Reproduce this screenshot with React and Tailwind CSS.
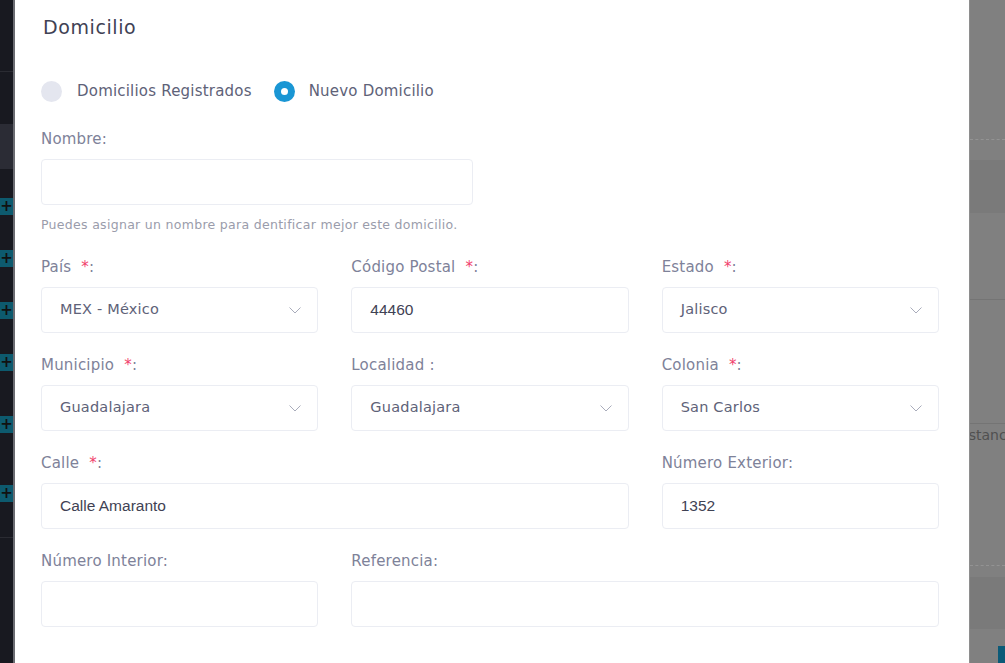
import React from 'react';

const sans = { fontFamily: '"DejaVu Sans", "Open Sans", sans-serif' };

const Chevron = () => (
  <svg width="12" height="7" viewBox="0 0 12 7" fill="none" className="shrink-0">
    <path d="M0.5 0.5 L6 6 L11.5 0.5" stroke="#a9acbb" strokeWidth="1" />
  </svg>
);

const Label = ({ children, required }) => (
  <div className="h-[20px] text-[15px] tracking-[0.2px] leading-[20px] text-[#7e8299] mb-[10px] whitespace-nowrap">
    {children}
    {required && <span className="text-[#f1416c] ml-[5px]">*</span>}
    :
  </div>
);

const SelectBox = ({ value }) => (
  <div className="h-[46px] rounded-[4px] border border-[#ebedf3] flex items-center justify-between pl-[18px] pr-[16px]">
    <span className="text-[14.5px] tracking-[0.2px] text-[#5e6278]">{value}</span>
    <Chevron />
  </div>
);

const InputBox = ({ value }) => (
  <div className="h-[46px] rounded-[4px] border border-[#ebedf3] flex items-center pl-[18px]">
    <span className="text-[15.5px] text-[#3f4254]" style={{ fontFamily: '"Liberation Sans", Arial, sans-serif' }}>
      {value}
    </span>
  </div>
);

const PlusTab = () => (
  <div className="w-[13px] h-[17px] bg-[#0d5a6e] flex items-center justify-center">
    <span className="text-[#111] text-[15px] font-bold leading-none">+</span>
  </div>
);

const LeftStrip = () => (
  <div className="w-[15px] shrink-0 bg-[#181920] border-r-2 border-[#6b6c72] flex flex-col">
    <div className="h-[72px] border-b border-[#2a2b32]" />
    <div className="h-[52px]" />
    <div className="h-[45px] bg-[#2b2c35]" />
    <div className="h-[29px]" />
    <PlusTab />
    <div className="h-[35px]" />
    <PlusTab />
    <div className="h-[35px]" />
    <PlusTab />
    <div className="h-[35px]" />
    <PlusTab />
    <div className="h-[45px]" />
    <PlusTab />
    <div className="h-[52px]" />
    <PlusTab />
    <div className="h-[36px] border-b border-[#2a2b32]" />
  </div>
);

const RightStrip = () => (
  <div className="flex-1 bg-[#808080] border-l border-[#8e8e8e] flex flex-col overflow-hidden">
    <div className="h-[140px] border-b border-dashed border-[#939393]" />
    <div className="h-[20px]" />
    <div className="h-[53px] bg-[#7a7a7a]" />
    <div className="h-[87px] border-b border-[#747474]" />
    <div className="h-[124px] border-b border-[#747474]" />
    <div className="h-[22px] overflow-hidden whitespace-nowrap text-[14px] leading-[22px] text-[#505050] -ml-[16px]">Distancia</div>
    <div className="h-[120px] border-b border-dashed border-[#939393]" />
    <div className="h-[11px]" />
    <div className="h-[52px] bg-[#7a7a7a]" />
    <div className="h-[17px]" />
    <div className="flex-1 ml-[28px] bg-[#0b5a78]" />
  </div>
);

export default function App() {
  return (
    <div className="flex h-screen w-full overflow-hidden bg-[#808080]" style={sans}>
      <LeftStrip />
      <main className="w-[954px] shrink-0 bg-white pl-[26px] pr-[30px]">
        <h2 className="pt-[15px] pl-[2px] text-[19px] tracking-[0.6px] leading-[24px] text-[#3f4254]">Domicilio</h2>

        <div className="mt-[42px] flex items-center h-[21px]">
          <span className="w-[21px] h-[21px] rounded-full bg-[#e4e6ef]" />
          <span className="ml-[15px] text-[15px] tracking-[0.2px] text-[#5e6278]">Domicilios Registrados</span>
          <span className="ml-[22px] w-[21px] h-[21px] rounded-full bg-[#1a96d4] flex items-center justify-center">
            <span className="w-[7px] h-[7px] rounded-full bg-white" />
          </span>
          <span className="ml-[14px] text-[15px] tracking-[0.2px] text-[#5e6278]">Nuevo Domicilio</span>
        </div>

        <div className="mt-[27px]">
          <Label>Nombre</Label>
          <div className="w-[432px] h-[46px] rounded-[4px] border border-[#ebedf3]" />
          <p className="mt-[12px] text-[12.5px] tracking-[0.3px] leading-[16px] text-[#9a9cab]">
            Puedes asignar un nombre para dentificar mejor este domicilio.
          </p>
        </div>

        <div className="mt-[24px] grid grid-cols-3 gap-x-[33px] gap-y-[22px]">
          <div>
            <Label required>País </Label>
            <SelectBox value="MEX - México" />
          </div>
          <div>
            <Label required>Código Postal </Label>
            <InputBox value="44460" />
          </div>
          <div>
            <Label required>Estado </Label>
            <SelectBox value="Jalisco" />
          </div>

          <div>
            <Label required>Municipio </Label>
            <SelectBox value="Guadalajara" />
          </div>
          <div>
            <Label>Localidad </Label>
            <SelectBox value="Guadalajara" />
          </div>
          <div>
            <Label required>Colonia </Label>
            <SelectBox value="San Carlos" />
          </div>

          <div className="col-span-2">
            <Label required>Calle </Label>
            <InputBox value="Calle Amaranto" />
          </div>
          <div>
            <Label>Número Exterior</Label>
            <InputBox value="1352" />
          </div>

          <div>
            <Label>Número Interior</Label>
            <InputBox value="" />
          </div>
          <div className="col-span-2">
            <Label>Referencia</Label>
            <InputBox value="" />
          </div>
        </div>
      </main>
      <RightStrip />
    </div>
  );
}
